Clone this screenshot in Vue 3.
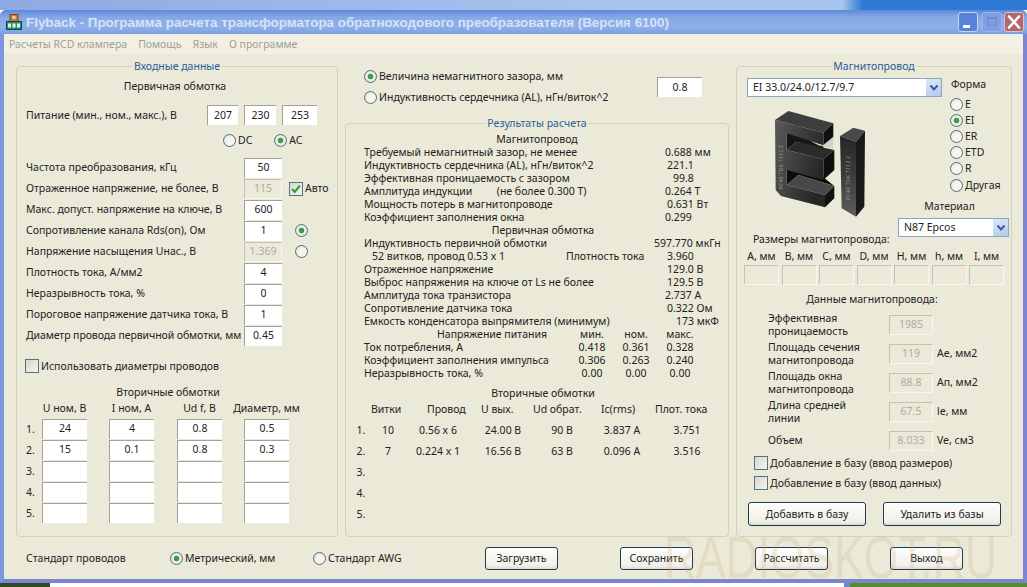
<template>
  <div class="desktop">
    <div class="top-strip"></div>
    <div class="window">
      <!-- заголовок -->
      <div class="titlebar">
        <svg class="app-icon" viewBox="0 0 16 16" width="16" height="16">
          <rect x="4" y="0.5" width="8" height="7" fill="#c8763a" stroke="#7a4a20" />
          <rect x="6.5" y="2" width="3" height="3" fill="#f3d9a0" />
          <rect x="0.5" y="7.5" width="15" height="8" fill="#2f8a6a" stroke="#14405a" />
          <rect x="2" y="9.5" width="3" height="4" fill="#dff2ea" />
          <rect x="6.5" y="9.5" width="3" height="4" fill="#dff2ea" />
          <rect x="11" y="9.5" width="3" height="4" fill="#dff2ea" />
        </svg>
        <span class="title-text">Flyback - Программа расчета трансформатора обратноходового преобразователя (Версия 6100)</span>
        <div class="win-btns">
          <div class="win-btn win-min"><i></i></div>
          <div class="win-btn win-max"><i></i></div>
          <div class="win-btn win-close">
            <svg viewBox="0 0 20 20" width="20" height="20">
              <path d="M5 4.5L15 15.5M15 4.5L5 15.5" stroke="#fff" stroke-width="2.6" stroke-linecap="round" />
            </svg>
          </div>
        </div>
      </div>

      <div class="menubar">
        <span v-for="m in menu" :key="m">{{ m }}</span>
      </div>

      <div class="main">
        <!-- Входные данные -->
        <fieldset class="box">
          <legend>Входные данные</legend>
          <div class="head head-primary">Первичная обмотка</div>
          <div class="supply">
            <span class="supply-label">Питание (мин., ном., макс.), В</span>
            <input class="field w31" value="207" readonly />
            <input class="field w32" value="230" readonly />
            <input class="field w35" value="253" readonly />
          </div>
          <div class="dc-ac">
            <label class="opt"><span class="radio"></span>DC</label>
            <label class="opt"><span class="radio on"></span>AC</label>
          </div>
          <div class="params">
            <div v-for="p in params" :key="p.label" class="param">
              <span class="param-label" :class="{ tight: p.tight }">{{ p.label }}</span>
              <input class="field" :class="{ off: p.off }" :value="p.value" readonly />
              <label v-if="p.check" class="opt auto"><span class="check">
                <svg viewBox="0 0 14 14" width="12" height="12"><path d="M2.5 7L5.5 10.5L11.5 3" fill="none" stroke="#2f9a3a" stroke-width="2.4" /></svg>
              </span>Авто</label>
              <span v-if="p.radio" class="radio side" :class="{ on: p.radio === 'on' }"></span>
            </div>
          </div>
          <label class="opt use-diam"><span class="check"></span>Использовать диаметры проводов</label>
          <div class="head head-second">Вторичные обмотки</div>
          <div class="sec-grid sec-head">
            <span></span>
            <span v-for="h in secHead" :key="h" class="sec-title">{{ h }}</span>
          </div>
          <div v-for="(row, i) in secRows" :key="i" class="sec-grid sec-row">
            <span class="sec-num">{{ i + 1 }}.</span>
            <input v-for="(v, j) in row" :key="j" class="field sec-field" :value="v" readonly />
          </div>
        </fieldset>

        <!-- Центральная колонка -->
        <div class="center">
          <div class="gap-block">
            <div class="gap-opts">
              <label class="opt gap-opt"><span class="radio on"></span>Величина немагнитного зазора, мм</label>
              <label class="opt gap-opt"><span class="radio"></span>Индуктивность сердечника (AL), нГн/виток^2</label>
            </div>
            <input class="field gap-field" value="0.8" readonly />
          </div>

          <fieldset class="box results">
            <legend>Результаты расчета</legend>
            <div class="res-lines">
              <template v-for="r in results" :key="r.key || r.label">
                <div v-if="r.head" class="res-head" :class="{ shifted: r.shift }">{{ r.label }}</div>
                <div v-else-if="r.triple" class="res-triple" :class="{ 'triple-head': r.tripleHead }">
                  <span>{{ r.label }}</span>
                  <span v-for="t in r.triple" :key="t" class="mid">{{ t }}</span>
                </div>
                <div v-else class="res-line" :class="{ indent: r.extra }">
                  <span class="res-label">
                    <span :class="{ 'res-first': r.extra }">{{ r.label }}</span>
                    <span v-if="r.extra">{{ r.extra }}</span>
                  </span>
                  <span :style="{ paddingLeft: r.x + 'px' }">{{ r.value }}</span>
                </div>
              </template>
            </div>
            <div class="res-head shifted res-second">Вторичные обмотки</div>
            <div class="out-head">
              <span v-for="h in outHead" :key="h">{{ h }}</span>
            </div>
            <div v-for="(row, i) in outRows" :key="i" class="out-row">
              <span>{{ i + 1 }}.</span>
              <span v-for="(v, j) in row" :key="j">{{ v }}</span>
            </div>
          </fieldset>
        </div>

        <!-- Магнитопровод -->
        <fieldset class="box">
          <legend>Магнитопровод</legend>
          <div class="core-top">
            <div class="combo core-combo">
              <span>EI 33.0/24.0/12.7/9.7</span>
              <i class="combo-btn"><svg viewBox="0 0 10 8" width="10" height="8"><path d="M1.5 1.5L5 5.5L8.5 1.5" fill="none" stroke="#3a5f9a" stroke-width="2" /></svg></i>
            </div>
            <div class="shapes">
              <div class="shapes-title">Форма</div>
              <label v-for="s in shapes" :key="s" class="opt shape"><span class="radio" :class="{ on: s === 'EI' }"></span>{{ s }}</label>
            </div>
            <svg class="core-pic" viewBox="0 0 390 375" width="130" height="125">
              <defs>
                <linearGradient id="front" x1="0" y1="0" x2="1" y2="0.4">
                  <stop offset="0" stop-color="#5a5a5a" />
                  <stop offset="0.6" stop-color="#3a3a3a" />
                  <stop offset="1" stop-color="#262626" />
                </linearGradient>
                <linearGradient id="piece" x1="0" y1="0" x2="0" y2="1">
                  <stop offset="0" stop-color="#262626" />
                  <stop offset="0.5" stop-color="#3d3d3d" />
                  <stop offset="1" stop-color="#5c5c5c" />
                </linearGradient>
              </defs>
              <path d="M95 100L125 75L205 135V150L125 125L95 150Z" fill="#161616" />
              <path d="M165 122L205 135L235 110V146L190 136Z" fill="#d4d3c3" />
              <path d="M95 210L125 188L160 196L238 258L130 225L95 255Z" fill="#0c0c0c" />
              <path d="M60 60L100 33L235 70L205 98Z" fill="#3e3e3e" />
              <path d="M205 98L235 70V110L205 135Z" fill="#101010" />
              <path d="M95 150L125 125L238 150L205 178Z" fill="#2b2b2b" />
              <path d="M205 178L238 150V210L205 240Z" fill="#0e0e0e" />
              <path d="M95 255L130 225L238 258L210 285Z" fill="#484848" />
              <path d="M210 285L238 258V295L210 322Z" fill="#121212" />
              <path d="M60 60L205 98V135L95 100V150L205 178V240L95 210V255L210 285V322L78 288L62 270Z" fill="url(#front)" />
              <path d="M255 108L295 83L330 92L303 125Z" fill="#4a4a4a" />
              <path d="M255 108L303 125V350L260 325Z" fill="url(#piece)" />
              <path d="M303 125L330 92L328 320L303 350Z" fill="#1a1a1a" />
              <text class="pic-mark" transform="translate(286 300) rotate(-90)">PC40 TDK T112 Z</text>
              <text class="pic-mark" transform="translate(85 268) rotate(-90)">PC40 TDK T112 Z</text>
            </svg>
            <div class="material">
              <div class="material-title">Материал</div>
              <div class="combo material-combo">
                <span>N87 Epcos</span>
                <i class="combo-btn"><svg viewBox="0 0 10 8" width="10" height="8"><path d="M1.5 1.5L5 5.5L8.5 1.5" fill="none" stroke="#3a5f9a" stroke-width="2" /></svg></i>
              </div>
            </div>
          </div>

          <div class="dims-title">Размеры магнитопровода:</div>
          <div class="dims">
            <div v-for="d in dims" :key="d" class="dim">
              <span>{{ d }}</span>
              <input class="field off dim-field" readonly />
            </div>
          </div>

          <div class="head core-data-title">Данные магнитопровода:</div>
          <div class="core-data">
            <div v-for="c in coreData" :key="c.value" class="core-row">
              <span class="core-label">{{ c.label }}</span>
              <input class="field off core-field" :value="c.value" readonly />
              <span class="core-unit">{{ c.unit }}</span>
            </div>
          </div>

          <div class="db-checks">
            <label class="opt"><span class="check"></span>Добавление в базу (ввод размеров)</label>
            <label class="opt"><span class="check"></span>Добавление в базу (ввод данных)</label>
          </div>
          <div class="db-btns">
            <button class="btn db-btn">Добавить в базу</button>
            <button class="btn db-btn">Удалить из базы</button>
          </div>
        </fieldset>
      </div>

      <div class="footer">
        <span class="std-label">Стандарт проводов</span>
        <label class="opt std-metric"><span class="radio on"></span>Метрический, мм</label>
        <label class="opt std-awg"><span class="radio"></span>Стандарт AWG</label>
        <div class="foot-btns">
          <button v-for="b in footBtns" :key="b" class="btn foot-btn">{{ b }}</button>
        </div>
      </div>
    </div>
    <div class="bottom-strip">
      <i class="strip-green"></i><i class="strip-white"></i><i class="strip-right"></i>
    </div>
    <div class="watermark">RADIOSKOT.RU</div>
  </div>
</template>

<script setup>
const menu = ['Расчеты RCD клампера', 'Помощь', 'Язык', 'О программе']

const params = [
  { label: 'Частота преобразования, кГц', value: '50' },
  { label: 'Отраженное напряжение, не более, В', value: '115', off: true, check: true },
  { label: 'Макс. допуст. напряжение на ключе, В', value: '600' },
  { label: 'Сопротивление канала Rds(on), Ом', value: '1', radio: 'on' },
  { label: 'Напряжение насыщения Uнас., В', value: '1.369', off: true, radio: 'off' },
  { label: 'Плотность тока, А/мм2', value: '4' },
  { label: 'Неразрывность тока, %', value: '0' },
  { label: 'Пороговое напряжение датчика тока, В', value: '1' },
  { label: 'Диаметр провода первичной обмотки, мм', value: '0.45', tight: true },
]

const secHead = ['U ном, В', 'I ном, А', 'Ud f, В', 'Диаметр, мм']
const secRows = [
  ['24', '4', '0.8', '0.5'],
  ['15', '0.1', '0.8', '0.3'],
  ['', '', '', ''],
  ['', '', '', ''],
  ['', '', '', ''],
]

const results = [
  { head: true, label: 'Магнитопровод' },
  { label: 'Требуемый немагнитный зазор, не менее', value: '0.688 мм', x: 11 },
  { label: 'Индуктивность сердечника (AL), нГн/виток^2', value: '221.1', x: 13 },
  { label: 'Эффективная проницаемость с зазором', value: '99.8', x: 19 },
  { label: 'Амплитуда индукции         (не более 0.300 Т)', value: '0.264 Т', x: 11 },
  { label: 'Мощность потерь в магнитопроводе', value: '0.631 Вт', x: 13 },
  { label: 'Коэффициент заполнения окна', value: '0.299', x: 11 },
  { head: true, shift: true, label: 'Первичная обмотка' },
  { label: 'Индуктивность первичной обмотки', value: '597.770 мкГн', x: 0 },
  { label: '52 витков, провод 0.53 x 1', extra: 'Плотность тока', value: '3.960', x: 13 },
  { label: 'Отраженное напряжение', value: '129.0 В', x: 13 },
  { label: 'Выброс напряжения на ключе от Ls не более', value: '129.5 В', x: 13 },
  { label: 'Амплитуда тока транзистора', value: '2.737 А', x: 11 },
  { label: 'Сопротивление датчика тока', value: '0.322 Ом', x: 13 },
  { label: 'Емкость конденсатора выпрямителя (минимум)', value: '173 мкФ', x: 22 },
  { label: 'Напряжение питания', key: 'supply', tripleHead: true, triple: ['мин.', 'ном.', 'макс.'] },
  { label: 'Ток потребления, А', triple: ['0.418', '0.361', '0.328'] },
  { label: 'Коэффициент заполнения импульса', triple: ['0.306', '0.263', '0.240'] },
  { label: 'Неразрывность тока, %', triple: ['0.00', '0.00', '0.00'] },
]

const outHead = ['Витки', 'Провод', 'U вых.', 'Ud обрат.', 'Ic(rms)', 'Плот. тока']
const outRows = [
  ['10', '0.56 x 6', '24.00 В', '90 В', '3.837 А', '3.751'],
  ['7', '0.224 x 1', '16.56 В', '63 В', '0.096 А', '3.516'],
  [],
  [],
  [],
]

const shapes = ['E', 'EI', 'ER', 'ETD', 'R', 'Другая']
const dims = ['A, мм', 'B, мм', 'C, мм', 'D, мм', 'H, мм', 'h, мм', 'I, мм']
const coreData = [
  { label: 'Эффективная проницаемость', value: '1985', unit: '' },
  { label: 'Площадь сечения магнитопровода', value: '119', unit: 'Ae, мм2' },
  { label: 'Площадь окна магнитопровода', value: '88.8', unit: 'Aп, мм2' },
  { label: 'Длина средней линии', value: '67.5', unit: 'le, мм' },
  { label: 'Объем', value: '8.033', unit: 'Ve, см3' },
]
const footBtns = ['Загрузить', 'Сохранить', 'Рассчитать', 'Выход']
</script>

<style>
html, body { margin: 0; background: #fff; overflow: hidden; }
</style>

<style scoped>
.desktop {
  position: relative;
  width: 1027px;
  height: 587px;
  overflow: hidden;
  font-family: "Noto Sans", "DejaVu Sans", sans-serif;
  font-size: 10.5px;
  line-height: 13px;
  color: #222;
}
.top-strip {
  height: 10px;
  background: linear-gradient(90deg, #8fa9e2 0%, #a9c4ee 60%, #a9c4ee 82%, #2f78d4 84%, #2f78d4 100%);
}
.window {
  height: 573px;
  box-sizing: border-box;
  display: flex;
  flex-direction: column;
  background: #ebe9d8;
  border-left: 4px solid #7d97de;
  border-right: 4px solid #7d86d4;
  border-bottom: 4px solid #7a84cf;
  border-radius: 6px 6px 0 0;
}

/* title */
.titlebar {
  height: 24px;
  margin: 0 -4px;
  padding: 0 3px 0 6px;
  flex-shrink: 0;
  display: flex;
  align-items: center;
  border-radius: 6px 6px 0 0;
  background: linear-gradient(180deg, #5c88dc 0%, #86a8e4 30%, #8fb0ea 70%, #7d9fe2 100%);
}
.app-icon { margin-right: 4px; flex-shrink: 0; }
.title-text {
  flex: 1;
  font-family: "Liberation Sans", sans-serif;
  font-size: 13.4px;
  font-weight: 700;
  white-space: nowrap;
  color: #d5e3f8;
}
.win-btns { display: flex; gap: 2px; }
.win-btn {
  width: 20px;
  height: 20px;
  box-sizing: border-box;
  border: 1px solid #c7d6f3;
  border-radius: 3px;
  position: relative;
}
.win-min { background: #5683d8; margin-right: 2px; }
.win-min i {
  position: absolute;
  left: 4px;
  bottom: 3px;
  width: 7px;
  height: 3px;
  background: #fff;
}
.win-max { background: #7f9fe0; border-color: #9cb5e8; }
.win-max i {
  position: absolute;
  left: 4px;
  top: 4px;
  width: 10px;
  height: 9px;
  border: 1px solid #6a8ad2;
  border-top-width: 2px;
  box-sizing: border-box;
}
.win-close { background: #b4676f; border-color: #d9c3cb; }
.win-close svg { position: absolute; left: -1px; top: -1px; }

.menubar {
  height: 20px;
  flex-shrink: 0;
  display: flex;
  align-items: center;
  padding-left: 5px;
  gap: 11px;
  color: #a09f92;
  background: #f2f0e3;
}

/* main layout */
.main {
  flex: 1;
  min-height: 0;
  display: grid;
  grid-template-columns: 322px 384px 276px;
  column-gap: 7px;
  padding: 6px 0 0 12px;
}
.box {
  margin: 0;
  padding: 0;
  min-width: 0;
  border: 1px solid #d2d0bf;
  border-radius: 4px;
}
legend {
  margin: 0 auto;
  padding: 0 2px;
  line-height: 13px;
  color: #2a5d9c;
}
.head { text-align: center; }

.field {
  display: block;
  width: 38px;
  height: 20px;
  box-sizing: border-box;
  margin: 0;
  padding: 0 0 2px;
  border: 0;
  border-top: 1px solid #a3a297;
  border-left: 1px solid #a3a297;
  background: #fff;
  font: inherit;
  color: #222;
  text-align: center;
  outline: none;
}
.field.off {
  background: #ebe9d8;
  color: #aeada0;
  border: 1px solid #c4c3b3;
  border-right-color: #f8f7ee;
  border-bottom-color: #f8f7ee;
}
.opt {
  display: flex;
  align-items: center;
  height: 14px;
  white-space: nowrap;
}
.radio {
  flex-shrink: 0;
  width: 13px;
  height: 13px;
  box-sizing: border-box;
  margin-right: 2px;
  border: 1px solid #4f6f86;
  border-radius: 50%;
  background: radial-gradient(circle at 60% 60%, #f6f6ee 40%, #d6d5c8 100%);
}
.radio.on {
  background: radial-gradient(circle, #3f9a4c 0 2.5px, #eef3e8 3.2px, #d4d6c8 100%);
}
.check {
  flex-shrink: 0;
  width: 14px;
  height: 14px;
  box-sizing: border-box;
  margin-right: 2px;
  border: 1px solid #4f7388;
  background: linear-gradient(135deg, #d8d7ca, #f5f5ee);
  display: flex;
  align-items: center;
  justify-content: center;
}

/* left */
.head-primary { height: 14px; padding: 7px 4px 7px 0; }
.supply {
  display: flex;
  gap: 6px;
  padding-left: 9px;
  margin-top: 4px;
  align-items: center;
}
.supply-label { width: 175px; white-space: nowrap; }
.field.w31 { width: 31px; }
.field.w32 { width: 32px; }
.field.w35 { width: 35px; }
.dc-ac {
  display: flex;
  gap: 22px;
  height: 14px;
  margin-top: 8px;
  padding-left: 206px;
}
.params { margin-top: 10px; padding-left: 9px; }
.param {
  display: grid;
  grid-template-columns: 218px 38px auto;
  height: 21px;
  align-items: center;
}
.param-label { white-space: nowrap; }
.param-label.tight { letter-spacing: -0.08px; }
.auto { margin-left: 7px; }
.side { margin-left: 13px; }
.use-diam { margin: 13px 0 0 8px; }
.head-second { margin-top: 13px; height: 14px; padding-right: 18px; }
.sec-grid {
  display: grid;
  grid-template-columns: 16px 67px 68px 67px 45px;
  padding-left: 9px;
}
.sec-head { margin-top: 2px; height: 14px; }
.sec-title {
  width: 45px;
  display: flex;
  justify-content: center;
  white-space: nowrap;
}
.sec-row { height: 21px; margin-top: 0; align-items: center; }
.sec-head + .sec-row { margin-top: 2px; }
.sec-field { width: 45px; }
.sec-num { padding-top: 2px; }

/* center */
.center { display: flex; flex-direction: column; min-width: 0; }
.gap-block {
  display: flex;
  justify-content: space-between;
  align-items: center;
  padding: 6px 27px 0 19px;
}
.gap-opt { height: 21px; }
.field.gap-field { width: 45px; }
.results { flex: 1; margin-top: 9px; }
.res-lines { padding-top: 3px; }
.res-head { height: 13px; text-align: center; }
.res-head.shifted { padding-left: 12px; }
.res-line {
  display: grid;
  grid-template-columns: 290px 1fr;
  height: 13px;
  margin-left: 18px;
  white-space: pre;
}
.res-label { display: flex; }
.res-first { width: 202px; padding-left: 8px; box-sizing: border-box; }
.res-triple {
  display: grid;
  grid-template-columns: 206px 44px 44px 44px;
  height: 13px;
  margin-left: 18px;
  white-space: nowrap;
}
.triple-head > span:first-child { padding-left: 73px; }
.mid { text-align: center; }
.res-second { margin-top: 7px; }
.out-head {
  display: grid;
  grid-template-columns: 56px 54px 52px 68px 54px 1fr;
  height: 14px;
  margin: 3px 0 2px;
  padding-left: 25px;
  white-space: nowrap;
}
.out-row {
  display: grid;
  grid-template-columns: 18px 36px 64px 66px 52px 68px 62px;
  height: 21px;
  align-items: center;
  margin-left: 6px;
  padding-top: 1px;
  box-sizing: border-box;
  text-align: center;
  white-space: nowrap;
}

/* right */
.core-top {
  display: grid;
  grid-template-columns: 151px 52px 61px;
  grid-template-rows: 22px 100px 37px;
  margin: 5px 0 0 10px;
}
.combo {
  height: 19px;
  box-sizing: border-box;
  display: flex;
  align-items: center;
  justify-content: space-between;
  padding-left: 5px;
  background: #fff;
  border: 1px solid #8da4c0;
}
.core-combo { grid-column: 1 / 3; grid-row: 1; width: 195px; }
.combo-btn {
  width: 15px;
  height: 17px;
  display: flex;
  align-items: center;
  justify-content: center;
  background: linear-gradient(160deg, #dfe8f8, #b4c8ea);
}
.shapes { grid-column: 3; grid-row: 1 / 3; }
.shapes-title { height: 14px; padding-left: 1px; margin-bottom: 4px; }
.shape { height: 16.2px; }
.core-pic { grid-column: 1; grid-row: 2 / 4; margin-left: 8px; }
.pic-mark { font-size: 15px; fill: #9a9a9a; letter-spacing: 1px; }
.material { grid-column: 2 / 4; grid-row: 3; }
.material-title { height: 14px; padding-right: 10px; text-align: center; }
.material-combo { width: 111px; margin-top: 4px; }
.dims-title { height: 14px; margin: -4px 0 0 16px; }
.dims {
  display: grid;
  grid-template-columns: repeat(7, 37.5px);
  margin: 3px 0 0 7px;
}
.dim { display: flex; flex-direction: column; align-items: center; width: 35px; white-space: nowrap; }
.dim span { height: 14px; margin-bottom: 1px; }
.field.dim-field { width: 35px; }
.core-data-title { height: 14px; margin-top: 8px; padding-right: 4px; }
.core-data { margin: 3px 0 0 31px; }
.core-row {
  display: grid;
  grid-template-columns: 121px 44px auto;
  height: 29px;
  align-items: center;
}
.core-label { width: 105px; }
.field.core-field { width: 44px; }
.core-unit { padding-left: 4px; }
.db-checks {
  display: flex;
  flex-direction: column;
  gap: 6px;
  margin: 1px 0 0 17px;
}
.db-btns { display: flex; gap: 17px; margin: 12px 0 0 11px; }
.btn {
  padding: 0;
  font: inherit;
  color: #222;
  background: linear-gradient(180deg, #fdfdfb, #f1f0e8 85%, #dcdace);
  border: 1px solid #203a52;
  border-radius: 3px;
}
.db-btn { width: 118px; height: 24px; }

/* footer */
.footer {
  height: 42px;
  flex-shrink: 0;
  display: flex;
  align-items: center;
  padding-left: 22px;
}
.std-label { width: 144px; white-space: nowrap; }
.std-metric { width: 143px; }
.std-awg { width: 172px; }
.foot-btns { display: flex; gap: 62px; }
.foot-btn { width: 73px; height: 23px; }

.bottom-strip { display: flex; height: 4px; }
.bottom-strip i { display: block; height: 100%; }
.strip-green { width: 50px; background: #2f4a22; }
.strip-white { width: 794px; background: #fff; }
.strip-right { flex: 1; background: linear-gradient(90deg, #6d88cf 0 6px, #5a8a30 6px); }

.watermark {
  position: absolute;
  left: 664px;
  top: 528px;
  font-family: "Liberation Sans", sans-serif;
  font-size: 60px;
  line-height: 60px;
  white-space: nowrap;
  color: rgba(205, 170, 125, 0.22);
  pointer-events: none;
  transform: scaleX(0.74);
  transform-origin: left top;
}
</style>
